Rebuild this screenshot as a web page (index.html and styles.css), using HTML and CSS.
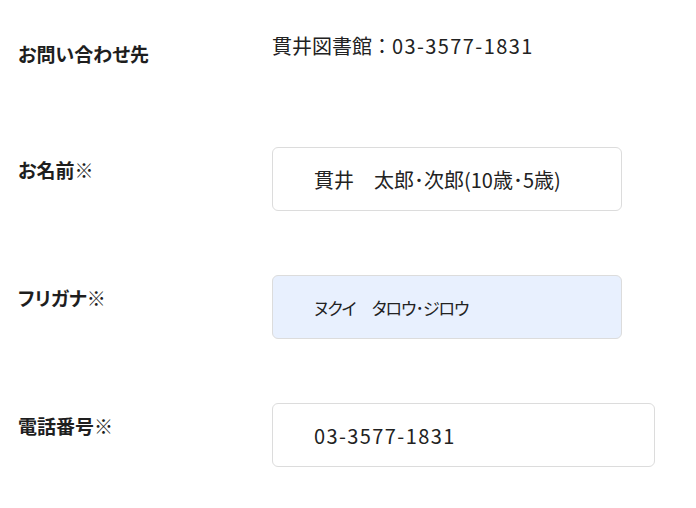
FILE: index.html
```html
<!DOCTYPE html>
<html lang="ja">
<head>
    <meta charset="UTF-8">
    <meta name="viewport" content="width=device-width, initial-scale=1.0">
    <title>お申し込みフォーム</title>
    <link rel="stylesheet" href="styles.css">
</head>
<body>

    <form class="entry-form">
        <div class="form-row">
            <div class="form-label">お問い合わせ先</div>
            <div class="form-value">貫井図書館：<span class="num">03-3577-1831</span></div>
        </div>

        <div class="form-row">
            <label class="form-label" for="name">お名前※</label>
            <input class="form-input" type="text" id="name" value="貫井　太郎･次郎(10歳･5歳)">
        </div>

        <div class="form-row">
            <label class="form-label" for="kana">フリガナ※</label>
            <input class="form-input is-filled kana" type="text" id="kana" value="ヌクイ　タロウ･ジロウ">
        </div>

        <div class="form-row">
            <label class="form-label" for="tel">電話番号※</label>
            <input class="form-input wide num" type="tel" id="tel" value="03-3577-1831">
        </div>
    </form>

</body>
</html>
```

FILE: styles.css
```css
/* Base styling */
body {
    font-family: 'Noto Sans CJK JP', 'Noto Sans', sans-serif;
    margin: 0;
    padding: 31px 18px 0;
    background: #fff;
    color: #222;
}

.form-row {
    display: flex;
    align-items: flex-start;
    margin-bottom: 64px;
}

.form-label {
    width: 254px;
    flex-shrink: 0;
    padding-top: 9px;
    font-size: 19px;
    font-weight: bold;
    line-height: 27px;
    color: #1e1e1e;
    font-feature-settings: "palt";
}

.form-value {
    font-size: 20px;
    line-height: 30px;
    height: 52px;
}

.num {
    letter-spacing: 1.4px;
}

.form-input {
    box-sizing: border-box;
    width: 350px;
    height: 64px;
    margin: 0;
    padding: 0 16px 0 41px;
    border: 1px solid #dcdcdc;
    border-radius: 6px;
    background: #fff;
    font-family: inherit;
    font-size: 20px;
    color: #222;
    outline: none;
}

.form-input.is-filled {
    background: #e8f0fe;
}

.form-input.kana {
    font-size: 17px;
    letter-spacing: -1px;
    font-feature-settings: "palt";
}

.form-input.wide {
    width: 383px;
}
```
